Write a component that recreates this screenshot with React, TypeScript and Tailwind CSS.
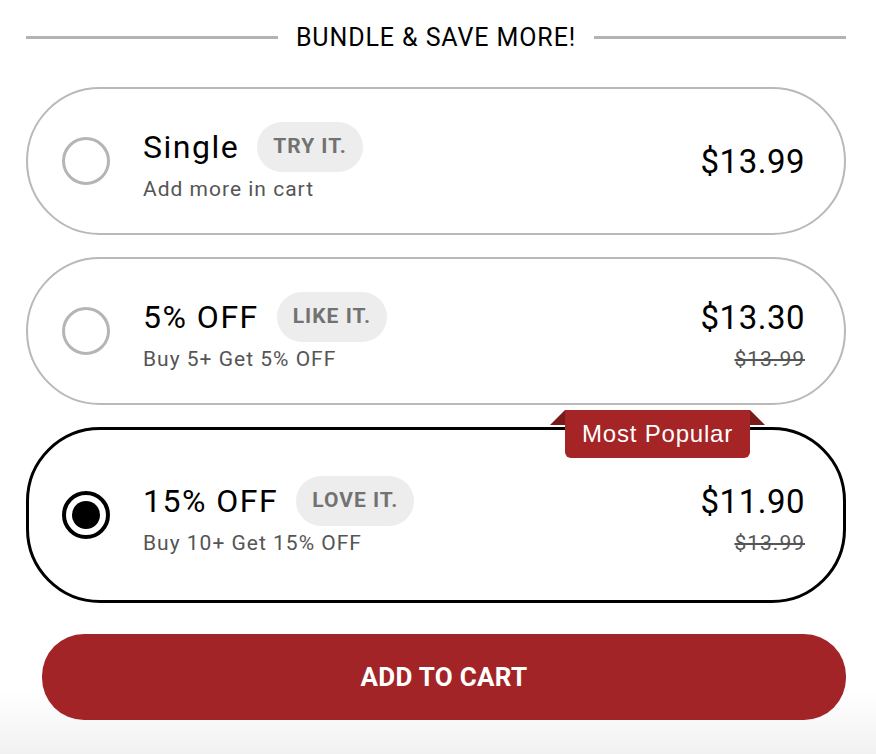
import React, { useState } from 'react';

interface Bundle {
  id: string;
  title: string;
  tag: string;
  subtitle: string;
  price: string;
  compareAt?: string;
  popular?: boolean;
}

const bundles: Bundle[] = [
  { id: 'single', title: 'Single', tag: 'TRY IT.', subtitle: 'Add more in cart', price: '$13.99' },
  { id: 'five', title: '5% OFF', tag: 'LIKE IT.', subtitle: 'Buy 5+ Get 5% OFF', price: '$13.30', compareAt: '$13.99' },
  { id: 'fifteen', title: '15% OFF', tag: 'LOVE IT.', subtitle: 'Buy 10+ Get 15% OFF', price: '$11.90', compareAt: '$13.99', popular: true },
];

const Radio: React.FC<{ checked: boolean }> = ({ checked }) =>
  checked ? (
    <div className="w-[48px] h-[48px] rounded-full border-[4px] border-black flex items-center justify-center shrink-0">
      <div className="w-[28px] h-[28px] rounded-full bg-black" />
    </div>
  ) : (
    <div className="w-[48px] h-[48px] rounded-full border-[3px] border-[#b5b5b5] shrink-0" />
  );

const App: React.FC = () => {
  const [selected, setSelected] = useState('fifteen');

  return (
    <div
      className="min-h-[754px] w-[876px] bg-[linear-gradient(to_bottom,#ffffff_690px,#f1f1f1_754px)] pl-[26px] pr-[30px] pt-[22px]"
      style={{ fontFamily: 'Roboto, "Noto Sans", sans-serif' }}
    >
      {/* header */}
      <div className="flex items-center gap-[18px] h-[30px]">
        <div className="flex-1 h-[3px] bg-[#b3b3b3]" />
        <span className="text-[25px] leading-none text-black tracking-[0.9px]">BUNDLE &amp; SAVE MORE!</span>
        <div className="flex-1 h-[3px] bg-[#b3b3b3]" />
      </div>

      <div className="flex flex-col gap-[22px] mt-[35px]">
        {bundles.map((b) => {
          const active = selected === b.id;
          return (
            <div
              key={b.id}
              onClick={() => setSelected(b.id)}
              className={
                active
                  ? 'relative flex items-center h-[176px] rounded-[74px] border-[3px] border-black bg-white pl-[33px] pr-[38px] cursor-pointer'
                  : 'relative flex items-center h-[148px] rounded-[74px] border-2 border-[#b9b9b9] bg-white pl-[34px] pr-[39px] cursor-pointer'
              }
            >
              {b.popular && (
                <div className="absolute right-[78px] top-[-20px] flex items-start">
                  <div className="w-0 h-0 border-l-[15px] border-l-transparent border-b-[15px] border-b-[#7a1b1b]" />
                  <div
                    className="h-[48px] w-[185px] bg-[#a52425] rounded-b-[6px] flex items-center justify-center text-white text-[24px] tracking-[0.8px]"
                    style={{ fontFamily: '"Liberation Sans", Arial, sans-serif' }}
                  >
                    Most Popular
                  </div>
                  <div className="w-0 h-0 border-r-[15px] border-r-transparent border-b-[15px] border-b-[#7a1b1b]" />
                </div>
              )}
              <Radio checked={active} />
              <div className="ml-[33px] flex flex-col">
                <div className="flex items-center gap-[18px]">
                  <span className="text-[32px] leading-none text-black tracking-[1.5px]">{b.title}</span>
                  <span className="h-[50px] px-[16px] rounded-full bg-[#ededed] text-[#727272] font-bold text-[21px] tracking-[1px] flex items-center">
                    {b.tag}
                  </span>
                </div>
                <span className="text-[21px] leading-none text-[#555] tracking-[1px] mt-[7px]">{b.subtitle}</span>
              </div>
              <div className="ml-auto flex flex-col items-end">
                <span className="text-[33px] leading-none text-black tracking-[0.5px] h-[50px] flex items-center">{b.price}</span>
                {b.compareAt && (
                  <span className="text-[21px] leading-none text-[#555] tracking-[1px] line-through mt-[7px]">{b.compareAt}</span>
                )}
              </div>
            </div>
          );
        })}
      </div>

      <button className="mt-[31px] ml-[16px] w-[804px] h-[86px] rounded-[42px] bg-[#a32426] text-white font-bold text-[26px] tracking-[0.3px]">
        ADD TO CART
      </button>
    </div>
  );
};

export default App;
